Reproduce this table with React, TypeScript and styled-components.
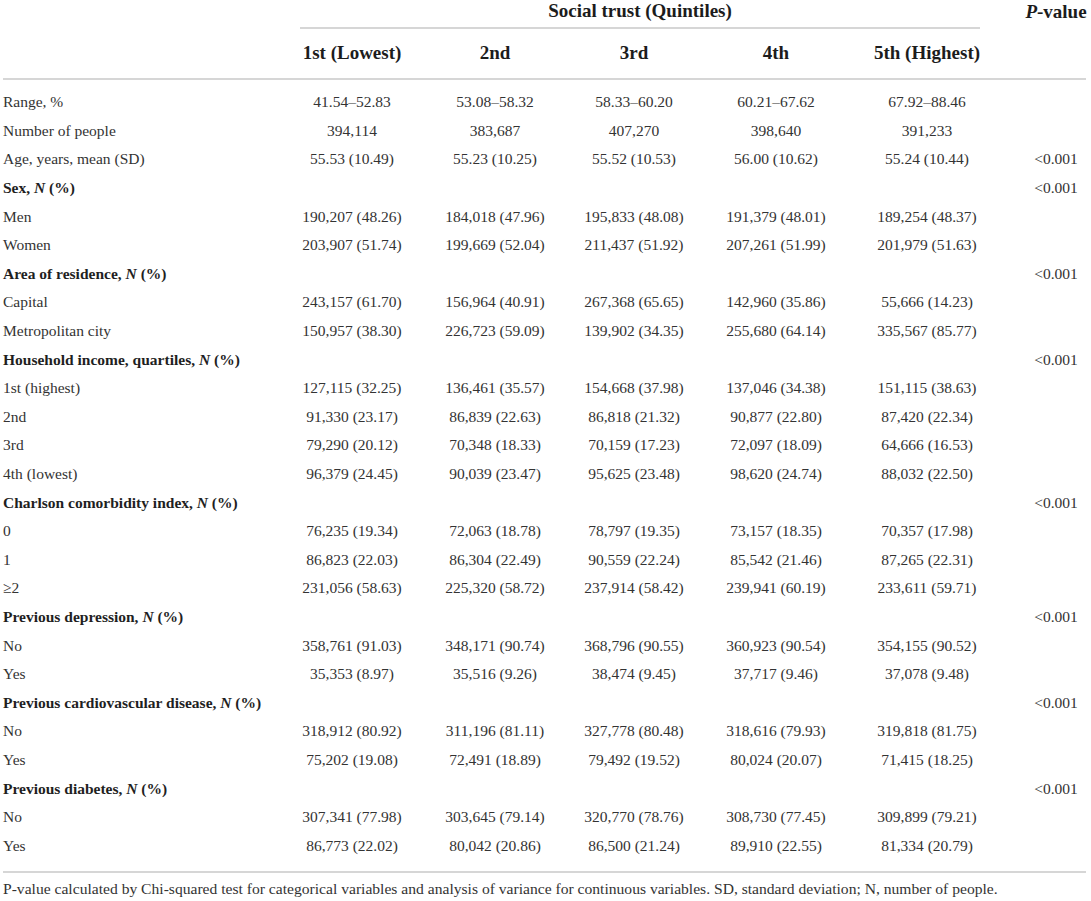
import React from "react";
import styled, { createGlobalStyle } from "styled-components";

const GlobalStyle = createGlobalStyle`
  html, body { margin: 0; padding: 0; background: #ffffff; }
  body { font-family: "Liberation Serif", "Times New Roman", serif; }
`;

const COLS = "279px 140px 146px 132px 152px 150px 84px";

const Page = styled.div`
  padding: 0 5px 0 3px;
  width: 1083px;
  color: #333333;
  font-family: "Liberation Serif", "Times New Roman", serif;
`;

const Table = styled.div`
  display: flex;
  flex-direction: column;
`;

const TopHeader = styled.div`
  display: grid;
  grid-template-columns: ${COLS};
  height: 32px;
`;

const SpanHeader = styled.div`
  grid-column: 2 / 7;
  margin: 0 22px 0 18px;
  height: 29px;
  border-bottom: 2px solid #d6d6d6;
  display: flex;
  align-items: center;
  justify-content: center;
  padding-bottom: 5px;
  box-sizing: border-box;
`;

const HeadText = styled.span`
  font-size: 19px;
  font-weight: 700;
  color: #1c1c1c;
  white-space: nowrap;
`;

const PHead = styled.div`
  grid-column: 7;
  display: flex;
  align-items: center;
  justify-content: center;
  padding-left: 24px;
  padding-bottom: 5px;
  height: 29px;
  box-sizing: border-box;
`;

const ColHeaderRow = styled.div`
  display: grid;
  grid-template-columns: ${COLS};
  height: 46px;
  align-items: center;
  border-bottom: 2px solid #d6d6d6;
`;

const ColHead = styled.div`
  text-align: center;
  padding-bottom: 4px;
`;

const Body = styled.div`
  padding: 8px 0 11px;
  border-bottom: 2px solid #d6d6d6;
`;

const Row = styled.div`
  display: grid;
  grid-template-columns: ${COLS};
  height: 28.6px;
  align-items: center;
  font-size: 15.5px;
`;

const Label = styled.div<{ $section?: boolean }>`
  font-weight: ${(p) => (p.$section ? 700 : 400)};
  color: ${(p) => (p.$section ? "#1f1f1f" : "#333333")};
  white-space: nowrap;
`;

const Value = styled.div`
  text-align: center;
  white-space: nowrap;
`;

const PValue = styled.div`
  text-align: center;
  padding-left: 24px;
  white-space: nowrap;
`;

const Footnote = styled.p`
  margin: 6px 0 0;
  font-size: 15.6px;
  line-height: 20px;
  color: #333333;
  white-space: nowrap;
`;

type RowData = {
  label: React.ReactNode;
  values?: string[];
  p?: string;
  section?: boolean;
};

const N = () => <i>N</i>;

const rows: RowData[] = [
  { label: "Range, %", values: ["41.54–52.83", "53.08–58.32", "58.33–60.20", "60.21–67.62", "67.92–88.46"] },
  { label: "Number of people", values: ["394,114", "383,687", "407,270", "398,640", "391,233"] },
  { label: "Age, years, mean (SD)", values: ["55.53 (10.49)", "55.23 (10.25)", "55.52 (10.53)", "56.00 (10.62)", "55.24 (10.44)"], p: "<0.001" },
  { label: <>Sex, <N /> (%)</>, section: true, p: "<0.001" },
  { label: "Men", values: ["190,207 (48.26)", "184,018 (47.96)", "195,833 (48.08)", "191,379 (48.01)", "189,254 (48.37)"] },
  { label: "Women", values: ["203,907 (51.74)", "199,669 (52.04)", "211,437 (51.92)", "207,261 (51.99)", "201,979 (51.63)"] },
  { label: <>Area of residence, <N /> (%)</>, section: true, p: "<0.001" },
  { label: "Capital", values: ["243,157 (61.70)", "156,964 (40.91)", "267,368 (65.65)", "142,960 (35.86)", "55,666 (14.23)"] },
  { label: "Metropolitan city", values: ["150,957 (38.30)", "226,723 (59.09)", "139,902 (34.35)", "255,680 (64.14)", "335,567 (85.77)"] },
  { label: <>Household income, quartiles, <N /> (%)</>, section: true, p: "<0.001" },
  { label: "1st (highest)", values: ["127,115 (32.25)", "136,461 (35.57)", "154,668 (37.98)", "137,046 (34.38)", "151,115 (38.63)"] },
  { label: "2nd", values: ["91,330 (23.17)", "86,839 (22.63)", "86,818 (21.32)", "90,877 (22.80)", "87,420 (22.34)"] },
  { label: "3rd", values: ["79,290 (20.12)", "70,348 (18.33)", "70,159 (17.23)", "72,097 (18.09)", "64,666 (16.53)"] },
  { label: "4th (lowest)", values: ["96,379 (24.45)", "90,039 (23.47)", "95,625 (23.48)", "98,620 (24.74)", "88,032 (22.50)"] },
  { label: <>Charlson comorbidity index, <N /> (%)</>, section: true, p: "<0.001" },
  { label: "0", values: ["76,235 (19.34)", "72,063 (18.78)", "78,797 (19.35)", "73,157 (18.35)", "70,357 (17.98)"] },
  { label: "1", values: ["86,823 (22.03)", "86,304 (22.49)", "90,559 (22.24)", "85,542 (21.46)", "87,265 (22.31)"] },
  { label: "≥2", values: ["231,056 (58.63)", "225,320 (58.72)", "237,914 (58.42)", "239,941 (60.19)", "233,611 (59.71)"] },
  { label: <>Previous depression, <N /> (%)</>, section: true, p: "<0.001" },
  { label: "No", values: ["358,761 (91.03)", "348,171 (90.74)", "368,796 (90.55)", "360,923 (90.54)", "354,155 (90.52)"] },
  { label: "Yes", values: ["35,353 (8.97)", "35,516 (9.26)", "38,474 (9.45)", "37,717 (9.46)", "37,078 (9.48)"] },
  { label: <>Previous cardiovascular disease, <N /> (%)</>, section: true, p: "<0.001" },
  { label: "No", values: ["318,912 (80.92)", "311,196 (81.11)", "327,778 (80.48)", "318,616 (79.93)", "319,818 (81.75)"] },
  { label: "Yes", values: ["75,202 (19.08)", "72,491 (18.89)", "79,492 (19.52)", "80,024 (20.07)", "71,415 (18.25)"] },
  { label: <>Previous diabetes, <N /> (%)</>, section: true, p: "<0.001" },
  { label: "No", values: ["307,341 (77.98)", "303,645 (79.14)", "320,770 (78.76)", "308,730 (77.45)", "309,899 (79.21)"] },
  { label: "Yes", values: ["86,773 (22.02)", "80,042 (20.86)", "86,500 (21.24)", "89,910 (22.55)", "81,334 (20.79)"] },
];

const headers = ["1st (Lowest)", "2nd", "3rd", "4th", "5th (Highest)"];

export default function App() {
  return (
    <>
      <GlobalStyle />
      <Page>
        <Table>
          <TopHeader>
            <SpanHeader>
              <HeadText>Social trust (Quintiles)</HeadText>
            </SpanHeader>
            <PHead>
              <HeadText>
                <i>P</i>-value
              </HeadText>
            </PHead>
          </TopHeader>
          <ColHeaderRow>
            <div />
            {headers.map((h) => (
              <ColHead key={h}>
                <HeadText>{h}</HeadText>
              </ColHead>
            ))}
            <div />
          </ColHeaderRow>
          <Body>
            {rows.map((r, i) => (
              <Row key={i}>
                <Label $section={r.section}>{r.label}</Label>
                {(r.values ?? ["", "", "", "", ""]).map((v, j) => (
                  <Value key={j}>{v}</Value>
                ))}
                <PValue>{r.p ?? ""}</PValue>
              </Row>
            ))}
          </Body>
        </Table>
        <Footnote>
          P-value calculated by Chi-squared test for categorical variables and analysis of variance for
          continuous variables. SD, standard deviation; N, number of people.
        </Footnote>
      </Page>
    </>
  );
}
